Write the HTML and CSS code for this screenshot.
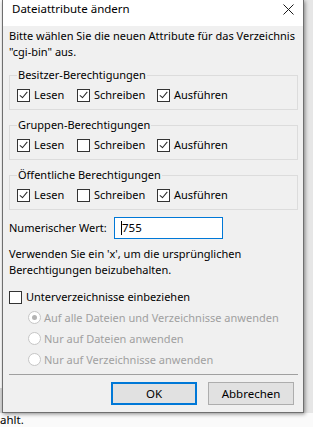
FILE: index.html
```html
<!DOCTYPE html>
<html lang="de">
<head>
  <meta charset="UTF-8">
  <title>Dateiattribute ändern</title>
  <link rel="stylesheet" href="styles.css">
</head>
<body>
<div class="desk">
  <div class="edge"></div>
  <div class="dialog">
    <div class="titlebar">
      <span class="title">Dateiattribute ändern</span>
      <svg class="close" width="11" height="11" viewBox="0 0 11 11">
        <path d="M0.5 0.5L10.5 10.5M10.5 0.5L0.5 10.5" stroke="#1a1a1a" stroke-width="1" fill="none"/>
      </svg>
    </div>

    <div class="content">
      <p class="intro">Bitte wählen Sie die neuen Attribute für das Verzeichnis<br>"cgi-bin" aus.</p>

      <fieldset class="group">
        <legend>Besitzer-Berechtigungen</legend>
        <div class="perms">
          <label class="check"><span class="box on"></span>Lesen</label>
          <label class="check"><span class="box on"></span>Schreiben</label>
          <label class="check"><span class="box on"></span>Ausführen</label>
        </div>
      </fieldset>

      <fieldset class="group">
        <legend>Gruppen-Berechtigungen</legend>
        <div class="perms">
          <label class="check"><span class="box on"></span>Lesen</label>
          <label class="check"><span class="box"></span>Schreiben</label>
          <label class="check"><span class="box on"></span>Ausführen</label>
        </div>
      </fieldset>

      <fieldset class="group">
        <legend>Öffentliche Berechtigungen</legend>
        <div class="perms">
          <label class="check"><span class="box on"></span>Lesen</label>
          <label class="check"><span class="box"></span>Schreiben</label>
          <label class="check"><span class="box on"></span>Ausführen</label>
        </div>
      </fieldset>

      <div class="numeric">
        <span class="numeric-label">Numerischer Wert:</span>
        <div class="field"><span class="caret"></span>755</div>
      </div>

      <p class="hint">Verwenden Sie ein 'x', um die ursprünglichen<br>Berechtigungen beizubehalten.</p>

      <label class="check sub"><span class="box"></span>Unterverzeichnisse einbeziehen</label>

      <div class="radios">
        <div class="radio"><span class="circle selected"></span>Auf alle Dateien und Verzeichnisse anwenden</div>
        <div class="radio"><span class="circle"></span>Nur auf Dateien anwenden</div>
        <div class="radio"><span class="circle"></span>Nur auf Verzeichnisse anwenden</div>
      </div>

      <div class="separator"></div>

      <div class="buttons">
        <button class="btn default">OK</button>
        <button class="btn">Abbrechen</button>
      </div>
    </div>
  </div>
</div>
<div class="below">ahlt.</div>
</body>
</html>
```

FILE: styles.css
```css
body {
    margin: 0;
    width: 313px;
    height: 427px;
    overflow: hidden;
    background-color: #fafafa;
    font-family: "Noto Sans", "Segoe UI", sans-serif;
    font-size: 11px;
    color: #000;
}

/* Hintergrund hinter dem Dialog */
.desk {
    display: flex;
    background-color: #e6e6e6;
}

.edge {
    width: 2px;
    background: linear-gradient(#fff 0 388px, #dadada 388px);
}

.dialog {
    width: 300px;
    border: 1px solid #6f6f6f;
    border-top: none;
    background-color: #f0f0f0;
    box-shadow: 1px 1px 4px rgba(0, 0, 0, 0.45);
}

.titlebar {
    height: 26px;
    background-color: #fff;
    display: flex;
    justify-content: space-between;
    align-items: flex-start;
    padding: 1px 0 0 9px;
    box-sizing: border-box;
    line-height: 16px;
    font-size: 11.5px;
}

.close {
    margin: 3px 9px 0 0;
}

.content {
    padding: 2px 5px 7px 6px;
    line-height: 16px;
}

.intro,
.hint {
    margin: 0;
}

.hint {
    margin-top: 7px;
}

/* Gruppenrahmen */
.group {
    margin: 7px 0 0;
    min-width: 0;
    border: 1px solid #dcdcdc;
    padding: 0 0 6px 7px;
}

.group legend {
    padding: 0 1px;
    line-height: 16px;
}

.perms {
    margin-top: 4px;
    display: grid;
    grid-template-columns: 60px 80px auto;
}

.check {
    display: flex;
    align-items: center;
    gap: 4px;
    height: 16px;
}

.box {
    width: 11px;
    height: 11px;
    border: 1px solid #333;
    background-color: #fff;
    position: relative;
}

.box.on::after {
    content: "";
    position: absolute;
    left: 3px;
    top: 0;
    width: 3px;
    height: 7px;
    border-right: 1px solid #222;
    border-bottom: 1px solid #222;
    transform: rotate(40deg);
    transform-origin: 60% 60%;
}

/* Numerischer Wert */
.numeric {
    margin-top: 7px;
    display: flex;
    align-items: center;
}

.numeric-label {
    width: 105px;
}

.field {
    width: 101px;
    height: 20px;
    border: 1px solid #0078d7;
    background-color: #fff;
    display: flex;
    align-items: center;
    padding-left: 6px;
    font-size: 11.5px;
}

.caret {
    width: 1px;
    height: 14px;
    background-color: #000;
    margin-right: 0;
}

.sub {
    margin-top: 11px;
}

/* deaktivierte Optionen */
.radios {
    margin-top: 2px;
    padding-left: 19px;
    color: #a0a0a0;
}

.radio {
    height: 21px;
    display: flex;
    align-items: center;
    gap: 3px;
}

.circle {
    width: 11px;
    height: 11px;
    border: 1px solid #c6c6c6;
    border-radius: 50%;
    background-color: #fff;
    position: relative;
}

.circle.selected::after {
    content: "";
    position: absolute;
    left: 3px;
    top: 3px;
    width: 5px;
    height: 5px;
    border-radius: 50%;
    background-color: #b4b4b4;
}

.separator {
    margin-top: 4px;
    height: 1px;
    background-color: #a0a0a0;
}

.buttons {
    margin-top: 7px;
    display: flex;
    justify-content: flex-end;
    gap: 11px;
    padding-right: 4px;
}

.btn {
    width: 86px;
    height: 23px;
    border: 1px solid #adadad;
    background-color: #e1e1e1;
    font-family: inherit;
    font-size: 11.5px;
    color: #000;
    padding: 0;
}

.btn.default {
    border: 2px solid #0078d7;
}

.below {
    line-height: 12px;
    padding-top: 1px;
    font-size: 11.5px;
}
```
